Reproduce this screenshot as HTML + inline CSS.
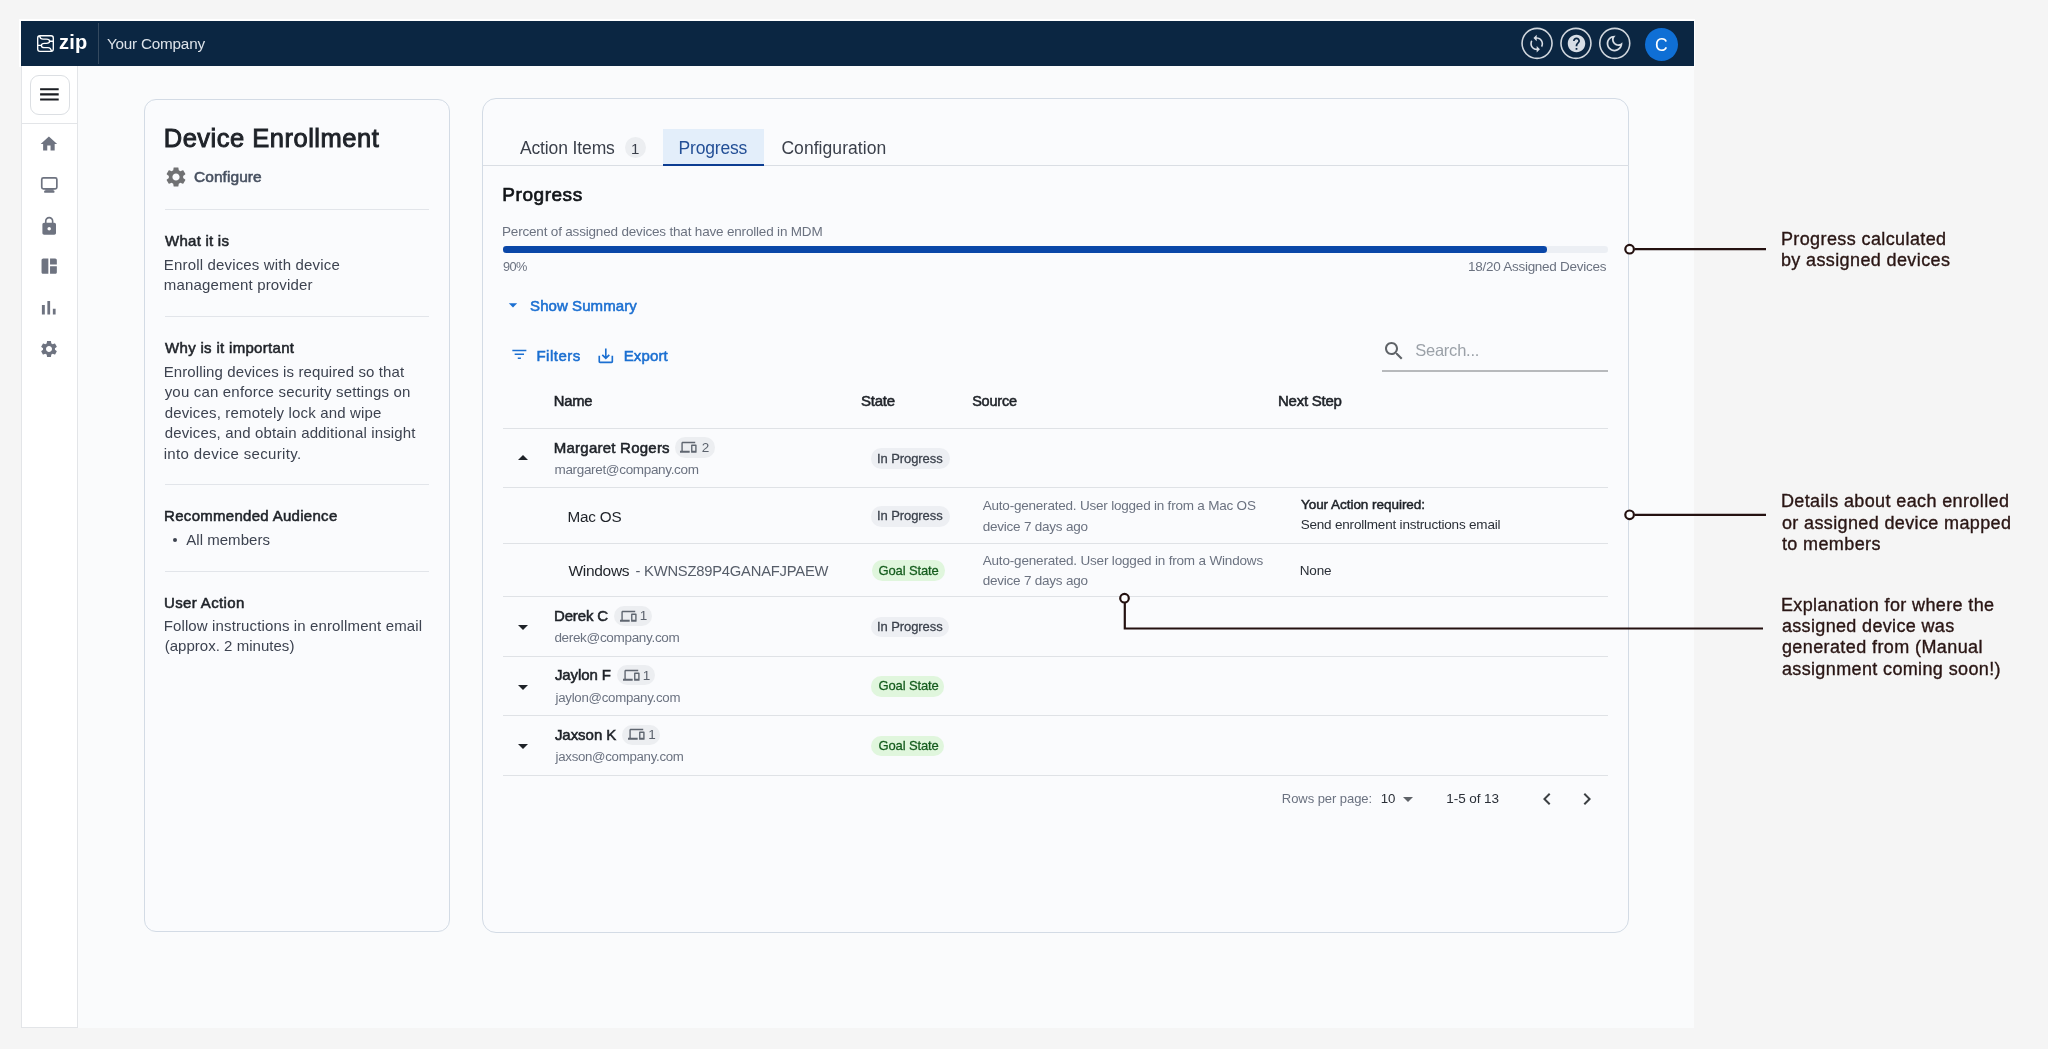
<!DOCTYPE html>
<html><head><meta charset="utf-8"><title>Device Enrollment</title>
<style>
html,body{margin:0;padding:0;}
body{width:2048px;height:1049px;background:#f5f5f5;position:relative;overflow:hidden;font-family:"Liberation Sans", sans-serif;}
.txt{position:absolute;left:0;top:0;width:2048px;height:1049px;will-change:transform;}
.t{position:absolute;white-space:nowrap;}
.a{position:absolute;box-sizing:border-box;}
svg.a{overflow:visible;}
</style></head><body>
<!-- frame -->
<div class="a" style="left:19px;top:19px;width:1676px;height:48px;background:#ffffff"></div>
<div class="a" style="left:78px;top:66px;width:1616px;height:962px;background:#fafbfc"></div>
<!-- header -->
<div class="a" style="left:20.5px;top:21px;width:1673.5px;height:45px;background:#0b2642"></div>
<div class="a" style="left:97.5px;top:23px;width:1px;height:41px;background:#34495f"></div>
<svg class="a" style="left:37px;top:34.9px" width="17" height="17" viewBox="0 0 17 17" fill="none" stroke="#ffffff" stroke-width="1.35">
  <rect x="0.7" y="0.7" width="15.6" height="15.6" rx="2.2"/>
  <path d="M2.6 0.8 C3.0 3.0 4.2 4.1 6.0 4.1 L9.4 4.1 C11.3 4.1 12.6 5.0 12.6 6.2 C12.6 7.4 11.3 8.3 9.4 8.3 L7.6 8.3 C5.7 8.3 4.4 9.2 4.4 10.4 C4.4 11.6 5.7 12.6 7.6 12.6 L11.0 12.6 C12.8 12.6 14.0 13.8 14.4 16.2"/>
  <path d="M12.6 6.2 H16.2 M0.8 10.4 H4.4"/>
</svg>
<!-- header icons -->
<svg class="a" style="left:0;top:0" width="1700" height="70"><circle cx="1537.05" cy="43.35" r="15" fill="none" stroke="#d0d6dd" stroke-width="1.6"/></svg>
<svg class="a" style="left:0;top:0" width="1700" height="70"><circle cx="1575.95" cy="43.35" r="15" fill="none" stroke="#d0d6dd" stroke-width="1.6"/></svg>
<svg class="a" style="left:0;top:0" width="1700" height="70"><circle cx="1614.75" cy="43.35" r="15" fill="none" stroke="#d0d6dd" stroke-width="1.6"/></svg>
<svg class="a" style="left:1527.3px;top:33.6px" width="19.4" height="19.4" viewBox="0 0 24 24" fill="#d7dde5"><path d="M12 4V1L8 5l4 4V6c3.31 0 6 2.69 6 6 0 1.01-.25 1.97-.7 2.8l1.46 1.46C19.54 15.03 20 13.57 20 12c0-4.42-3.58-8-8-8zm0 14c-3.31 0-6-2.69-6-6 0-1.01.25-1.97.7-2.8L5.24 7.74C4.46 8.97 4 10.43 4 12c0 4.42 3.58 8 8 8v3l4-4-4-4v3z"/></svg>
<svg class="a" style="left:1565.5px;top:32.8px" width="21" height="21" viewBox="0 0 24 24" fill="#d7dde5"><path d="M12 2C6.48 2 2 6.48 2 12s4.48 10 10 10 10-4.48 10-10S17.52 2 12 2zm1 17h-2v-2h2v2zm2.07-7.75l-.9.92C13.45 12.9 13 13.5 13 15h-2v-.5c0-1.1.45-2.1 1.17-2.83l1.24-1.26c.37-.36.59-.86.59-1.41 0-1.1-.9-2-2-2s-2 .9-2 2H8c0-2.21 1.79-4 4-4s4 1.79 4 4c0 .88-.36 1.68-.93 2.25z"/></svg>
<svg class="a" style="left:1604.3px;top:32.8px" width="21" height="21" viewBox="0 0 24 24" fill="#d7dde5"><path d="M9.37 5.51c-.18.64-.27 1.31-.27 1.99 0 4.08 3.32 7.4 7.4 7.4.68 0 1.35-.09 1.99-.27C17.45 17.19 14.93 19 12 19c-3.86 0-7-3.14-7-7 0-2.93 1.81-5.450 4.37-6.49zM12 3c-4.97 0-9 4.03-9 9s4.03 9 9 9 9-4.03 9-9c0-.46-.04-.92-.1-1.36-.98 1.37-2.58 2.26-4.4 2.26-2.98 0-5.4-2.42-5.4-5.4 0-1.81.89-3.42 2.26-4.4-.44-.06-.9-.1-1.36-.1z"/></svg>
<div class="a" style="left:1644.8px;top:27.7px;width:33px;height:33px;background:#0f6fd5;border-radius:50%"></div>

<!-- sidebar -->
<div class="a" style="left:20.5px;top:66px;width:57.5px;height:962px;background:#ffffff;border:1px solid #e3e5e8;border-top:none"></div>
<div class="a" style="left:29.5px;top:74.5px;width:40px;height:40px;border:1px solid #dcdfe3;border-radius:9px;background:#fff"></div>
<svg class="a" style="left:37.2px;top:82.2px" width="24.8" height="24.8" viewBox="0 0 24 24" fill="#1a1d22"><path d="M3 18h18v-2H3v2zm0-5h18v-2H3v2zm0-5h18V6H3v2z"/></svg>
<div class="a" style="left:21.5px;top:122.5px;width:55.5px;height:1px;background:#e3e5e8"></div>
<svg class="a" style="left:39.15px;top:133.6px" width="19.8" height="19.8" viewBox="0 0 24 24" fill="#6e7380"><path d="M10 20v-6h4v6h5v-8h3L12 3 2 12h3v8z"/></svg>
<svg class="a" style="left:0;top:0" width="80" height="200" viewBox="0 0 80 200"><rect x="41.75" y="177.85" width="15.1" height="11" rx="1.6" fill="none" stroke="#6e7380" stroke-width="1.7"/><rect x="45.3" y="189.2" width="8.2" height="1.6" fill="#6e7380"/><rect x="44.2" y="190.6" width="10.2" height="2.2" rx="0.6" fill="#6e7380"/></svg>
<svg class="a" style="left:39px;top:215.75px" width="20.4" height="20.4" viewBox="0 0 24 24" fill="#6e7380"><path d="M18 8h-1V6c0-2.76-2.24-5-5-5S7 3.24 7 6v2H6c-1.1 0-2 .9-2 2v10c0 1.1.9 2 2 2h12c1.1 0 2-.9 2-2V10c0-1.1-.9-2-2-2zm-6 9c-1.1 0-2-.9-2-2s.9-2 2-2 2 .9 2 2-.9 2-2 2zm3.1-9H8.9V6c0-1.71 1.39-3.1 3.1-3.1 1.71 0 3.1 1.39 3.1 3.1v2z"/></svg>
<svg class="a" style="left:39.15px;top:256.45px" width="20.4" height="20.4" viewBox="0 0 24 24" fill="#6e7380"><path d="M11 21H5c-1.1 0-2-.9-2-2V5c0-1.1.9-2 2-2h6v18zm2 0h6c1.1 0 2-.9 2-2v-7h-8v9zm8-11V5c0-1.1-.9-2-2-2h-6v7h8z"/></svg>
<svg class="a" style="left:37.4px;top:296.1px" width="23.5" height="23.5" viewBox="0 0 24 24" fill="#6e7380"><path d="M5 9.2h3V19H5zM10.6 5h2.8v14h-2.8zm5.6 8H19v6h-2.8z"/></svg>
<svg class="a" style="left:39.2px;top:338.9px" width="20" height="20" viewBox="0 0 24 24" fill="#6e7380"><path d="M19.14 12.94c.04-.3.06-.61.06-.94 0-.32-.02-.64-.07-.94l2.03-1.58c.18-.14.23-.41.12-.61l-1.92-3.32c-.12-.22-.37-.29-.59-.22l-2.39.96c-.5-.38-1.030-.7-1.62-.94l-.36-2.54c-.04-.24-.24-.41-.48-.41h-3.84c-.24 0-.43.17-.47.41l-.36 2.54c-.59.24-1.13.57-1.62.94l-2.39-.96c-.22-.08-.47 0-.59.22L2.74 8.87c-.12.21-.08.47.12.61l2.03 1.58c-.05.3-.09.63-.09.94s.02.64.07.94l-2.03 1.58c-.18.14-.23.41-.12.61l1.92 3.32c.12.22.37.29.59.22l2.39-.96c.5.38 1.03.7 1.62.94l.36 2.54c.05.24.24.41.48.41h3.84c.24 0 .44-.17.47-.41l.36-2.54c.59-.24 1.13-.56 1.62-.94l2.39.96c.22.08.47 0 .59-.22l1.92-3.32c.12-.22.07-.47-.12-.61l-2.01-1.58zM12 15.6c-1.98 0-3.6-1.62-3.6-3.6s1.62-3.6 3.6-3.6 3.6 1.62 3.6 3.6-1.62 3.6-3.6 3.6z"/></svg>

<!-- left card -->
<div class="a" style="left:144px;top:99px;width:305.5px;height:832.5px;border:1.4px solid #d3dbe5;border-radius:12px;background:#fafbfd"></div>
<svg class="a" style="left:164.3px;top:164.9px" width="24" height="24" viewBox="0 0 24 24" fill="#707173"><path d="M19.14 12.94c.04-.3.06-.61.06-.94 0-.32-.02-.64-.07-.94l2.03-1.58c.18-.14.23-.41.12-.61l-1.92-3.32c-.12-.22-.37-.29-.59-.22l-2.39.96c-.5-.38-1.030-.7-1.62-.94l-.36-2.54c-.04-.24-.24-.41-.48-.41h-3.84c-.24 0-.43.17-.47.41l-.36 2.54c-.59.24-1.13.57-1.620.94l-2.39-.96c-.22-.08-.47 0-.59.22L2.74 8.87c-.12.21-.08.47.12.61l2.03 1.58c-.05.3-.09.63-.09.94s.02.64.07.94l-2.03 1.58c-.18.14-.23.41-.12.61l1.92 3.32c.12.22.37.29.59.22l2.39-.96c.5.38 1.03.7 1.62.94l.36 2.54c.05.24.24.41.48.41h3.840c.24 0 .44-.17.47-.41l.36-2.54c.59-.24 1.13-.56 1.62-.94l2.39.96c.22.08.47 0 .59-.22l1.92-3.32c.12-.22.07-.47-.12-.61l-2.01-1.58zM12 15.6c-1.98 0-3.6-1.62-3.6-3.6s1.62-3.6 3.6-3.6 3.6 1.62 3.6 3.6-1.62 3.6-3.6 3.6z"/></svg>
<div class="a" style="left:164.7px;top:209px;width:264.5px;height:1.2px;background:#e2e5ea"></div>
<div class="a" style="left:164.7px;top:316px;width:264.5px;height:1.2px;background:#e2e5ea"></div>
<div class="a" style="left:164.7px;top:484.2px;width:264.5px;height:1.2px;background:#e2e5ea"></div>
<div class="a" style="left:164.7px;top:570.7px;width:264.5px;height:1.2px;background:#e2e5ea"></div>
<div class="a" style="left:173.2px;top:538px;width:4px;height:4px;border-radius:50%;background:#3d4350"></div>

<!-- right card -->
<div class="a" style="left:481.5px;top:98px;width:1147.8px;height:834.5px;border:1.4px solid #d3dbe5;border-radius:14px;background:#fafbfd"></div>
<div class="a" style="left:482.5px;top:164.8px;width:1146px;height:1.5px;background:#dadee4"></div>
<div class="a" style="left:662.9px;top:129.2px;width:101.3px;height:36.8px;background:#e3eefa"></div>
<div class="a" style="left:662.9px;top:163.5px;width:101.3px;height:2.5px;background:#0c3d92"></div>
<div class="a" style="left:624.8px;top:136.8px;width:21.4px;height:21.5px;border-radius:11px;background:#eceef1"></div>

<!-- progress -->
<div class="a" style="left:503px;top:246.3px;width:1104.6px;height:6.6px;border-radius:3.3px;background:#eceff4"></div>
<div class="a" style="left:503px;top:246.3px;width:1044px;height:6.6px;border-radius:3.3px;background:#0a47a8"></div>
<svg class="a" style="left:503px;top:295.3px" width="20" height="20" viewBox="0 0 24 24" fill="#1b6fd1"><path d="M7 10l5 5 5-5z"/></svg>

<!-- toolbar -->
<svg class="a" style="left:509.6px;top:345.3px" width="18.7" height="18.7" viewBox="0 0 24 24" fill="#1b6fd1"><path d="M10 18h4v-2h-4v2zM3 6v2h18V6H3zm3 7h12v-2H6v2z"/></svg>
<svg class="a" style="left:596.45px;top:345.55px" width="19.6" height="19.6" viewBox="0 0 24 24" fill="#1b6fd1"><path d="M19 12v7H5v-7H3v7c0 1.1.9 2 2 2h14c1.1 0 2-.9 2-2v-7h-2zm-6 .67l2.59-2.58L17 11.5l-5 5-5-5 1.41-1.41L11 12.67V3h2z"/></svg>
<svg class="a" style="left:1381.5px;top:338.5px" width="24" height="24" viewBox="0 0 24 24" fill="#5f6368"><path d="M15.5 14h-.79l-.28-.27C15.41 12.59 16 11.11 16 9.5 16 5.910 13.09 3 9.5 3S3 5.91 3 9.5 5.91 16 9.5 16c1.61 0 3.09-.59 4.23-1.57l.27.28v.79l5 4.99L20.49 19l-4.99-5zm-6 0C7.01 14 5 11.99 5 9.5S7.01 5 9.5 5 14 7.01 14 9.5 11.990 14 9.5 14z"/></svg>
<div class="a" style="left:1382px;top:370px;width:225.6px;height:1.8px;background:#b7b9bc"></div>

<!-- table lines -->
<div class="a" style="left:503px;top:427.8px;width:1104.6px;height:1.2px;background:#dfe2e6"></div>
<div class="a" style="left:503px;top:487.3px;width:1104.6px;height:1.2px;background:#dfe2e6"></div>
<div class="a" style="left:503px;top:542.6px;width:1104.6px;height:1.2px;background:#dfe2e6"></div>
<div class="a" style="left:503px;top:596px;width:1104.6px;height:1.2px;background:#dfe2e6"></div>
<div class="a" style="left:503px;top:655.9px;width:1104.6px;height:1.2px;background:#dfe2e6"></div>
<div class="a" style="left:503px;top:715.2px;width:1104.6px;height:1.2px;background:#dfe2e6"></div>
<div class="a" style="left:503px;top:774.7px;width:1104.6px;height:1.2px;background:#dfe2e6"></div>

<!-- expand arrows -->
<svg class="a" style="left:511.4px;top:446.4px" width="24" height="24" viewBox="0 0 24 24" fill="#1e2228"><path d="M7 14l5-5 5 5z"/></svg>
<svg class="a" style="left:511.1px;top:615.1px" width="24" height="24" viewBox="0 0 24 24" fill="#1e2228"><path d="M7 10l5 5 5-5z"/></svg>
<svg class="a" style="left:511.1px;top:674.6px" width="24" height="24" viewBox="0 0 24 24" fill="#1e2228"><path d="M7 10l5 5 5-5z"/></svg>
<svg class="a" style="left:511.1px;top:734.1px" width="24" height="24" viewBox="0 0 24 24" fill="#1e2228"><path d="M7 10l5 5 5-5z"/></svg>

<!-- device badges -->
<div class="a" style="left:674.9px;top:437.3px;width:39.7px;height:20.3px;border-radius:10.2px;background:#eceef1"></div>
<div class="a" style="left:614.1px;top:605.9px;width:38.1px;height:19.9px;border-radius:10px;background:#eceef1"></div>
<div class="a" style="left:617.1px;top:665.2px;width:38px;height:20px;border-radius:10px;background:#eceef1"></div>
<div class="a" style="left:622.3px;top:725px;width:38px;height:19.9px;border-radius:10px;background:#eceef1"></div>

<svg class="a" style="left:680.2px;top:439.2px" width="16.6" height="16.6" viewBox="0 0 24 24" fill="#5f6670"><path d="M4 6h18V4H4c-1.1 0-2 .9-2 2v11H0v3h14v-3H4V6zm19 2h-6c-.55 0-1 .45-1 1v10c0 .55.45 1 1 1h6c.55 0 1-.45 1-1V9c0-.55-.45-1-1-1zm-1 9h-4v-7h4v7z"/></svg>
<svg class="a" style="left:619.6px;top:607.5px" width="16.6" height="16.6" viewBox="0 0 24 24" fill="#5f6670"><path d="M4 6h18V4H4c-1.1 0-2 .9-2 2v11H0v3h14v-3H4V6zm19 2h-6c-.55 0-1 .45-1 1v10c0 .55.45 1 1 1h6c.55 0 1-.45 1-1V9c0-.55-.45-1-1-1zm-1 9h-4v-7h4v7z"/></svg>
<svg class="a" style="left:622.6px;top:666.8px" width="16.6" height="16.6" viewBox="0 0 24 24" fill="#5f6670"><path d="M4 6h18V4H4c-1.1 0-2 .9-2 2v11H0v3h14v-3H4V6zm19 2h-6c-.55 0-1 .45-1 1v10c0 .55.45 1 1 1h6c.55 0 1-.45 1-1V9c0-.55-.45-1-1-1zm-1 9h-4v-7h4v7z"/></svg>
<svg class="a" style="left:627.6px;top:726.3px" width="16.6" height="16.6" viewBox="0 0 24 24" fill="#5f6670"><path d="M4 6h18V4H4c-1.1 0-2 .9-2 2v11H0v3h14v-3H4V6zm19 2h-6c-.55 0-1 .45-1 1v10c0 .55.45 1 1 1h6c.55 0 1-.45 1-1V9c0-.55-.45-1-1-1zm-1 9h-4v-7h4v7z"/></svg>
<!-- state pills -->
<div class="a" style="left:871px;top:448.4px;width:79px;height:20.6px;border-radius:10.3px;background:#edeff3"></div>
<div class="a" style="left:871px;top:506.4px;width:79px;height:20.6px;border-radius:10.3px;background:#edeff3"></div>
<div class="a" style="left:871.5px;top:560.4px;width:73.7px;height:20.6px;border-radius:10.3px;background:#e0f6dd"></div>
<div class="a" style="left:871px;top:616.9px;width:78.4px;height:20.4px;border-radius:10.2px;background:#edeff3"></div>
<div class="a" style="left:871px;top:676.4px;width:73.4px;height:20.2px;border-radius:10.1px;background:#e0f6dd"></div>
<div class="a" style="left:871px;top:735.9px;width:73.4px;height:20.2px;border-radius:10.1px;background:#e0f6dd"></div>

<!-- pagination icons -->
<svg class="a" style="left:1395.8px;top:786.5px" width="24" height="24" viewBox="0 0 24 24" fill="#5f6368"><path d="M7 10l5 5 5-5z"/></svg>
<svg class="a" style="left:1534.5px;top:786.6px" width="24" height="24" viewBox="0 0 24 24" fill="#3c4043"><path d="M15.41 7.41L14 6l-6 6 6 6 1.41-1.41L10.83 12z"/></svg>
<svg class="a" style="left:1575.2px;top:786.6px" width="24" height="24" viewBox="0 0 24 24" fill="#3c4043"><path d="M10 6L8.59 7.41 13.17 12l-4.58 4.59L10 18l6-6z"/></svg>

<!-- annotations -->
<svg class="a" style="left:0;top:0" width="2048" height="1049" viewBox="0 0 2048 1049" fill="none" stroke="#241110" stroke-width="2.2">
  <path d="M1634.6 249.2 H1766"/>
  <circle cx="1629.6" cy="249.2" r="4.3" fill="#fff"/>
  <path d="M1634.6 514.8 H1766"/>
  <circle cx="1629.6" cy="514.8" r="4.3" fill="#fff"/>
  <path d="M1124.8 602.5 V628.5 H1763"/>
  <circle cx="1124.5" cy="598.2" r="4.3" fill="#fff"/>
</svg>

<div class="txt">
<span class="t" style="left:59.10px;top:32px;font-size:20px;line-height:20px;color:#ffffff;font-weight:700;letter-spacing:0.122px">zip</span>
<span class="t" style="left:107.00px;top:36px;font-size:15.25px;line-height:15.25px;color:#dde3ea;letter-spacing:-0.206px">Your Company</span>
<span class="t" style="left:1655.00px;top:37px;font-size:17.5px;line-height:17.5px;color:#ffffff">C</span>
<span class="t" style="left:163.77px;top:126px;font-size:25.5px;line-height:25.5px;color:#1e2228;-webkit-text-stroke:0.94px #1e2228;letter-spacing:0.502px">Device Enrollment</span>
<span class="t" style="left:193.98px;top:169px;font-size:15.5px;line-height:15.5px;color:#475060;-webkit-text-stroke:0.57px #475060;letter-spacing:0.068px">Configure</span>
<span class="t" style="left:165.08px;top:233px;font-size:15px;line-height:15px;color:#1e2228;-webkit-text-stroke:0.55px #1e2228;letter-spacing:0.241px">What it is</span>
<span class="t" style="left:163.80px;top:257px;font-size:15px;line-height:15px;color:#3d4350;letter-spacing:0.168px">Enroll devices with device</span>
<span class="t" style="left:163.80px;top:277px;font-size:15px;line-height:15px;color:#3d4350;letter-spacing:0.149px">management provider</span>
<span class="t" style="left:165.08px;top:340px;font-size:15px;line-height:15px;color:#1e2228;-webkit-text-stroke:0.55px #1e2228;letter-spacing:0.309px">Why is it important</span>
<span class="t" style="left:163.70px;top:364px;font-size:15px;line-height:15px;color:#3d4350;letter-spacing:0.102px">Enrolling devices is required so that</span>
<span class="t" style="left:164.70px;top:384px;font-size:15px;line-height:15px;color:#3d4350;letter-spacing:0.181px">you can enforce security settings on</span>
<span class="t" style="left:164.70px;top:405px;font-size:15px;line-height:15px;color:#3d4350;letter-spacing:0.163px">devices, remotely lock and wipe</span>
<span class="t" style="left:164.70px;top:425px;font-size:15px;line-height:15px;color:#3d4350;letter-spacing:0.151px">devices, and obtain additional insight</span>
<span class="t" style="left:163.70px;top:446px;font-size:15px;line-height:15px;color:#3d4350;letter-spacing:0.343px">into device security.</span>
<span class="t" style="left:164.08px;top:508px;font-size:15px;line-height:15px;color:#1e2228;-webkit-text-stroke:0.55px #1e2228;letter-spacing:0.292px">Recommended Audience</span>
<span class="t" style="left:186.30px;top:532px;font-size:15px;line-height:15px;color:#3d4350;letter-spacing:0.025px">All members</span>
<span class="t" style="left:164.08px;top:595px;font-size:15px;line-height:15px;color:#1e2228;-webkit-text-stroke:0.55px #1e2228;letter-spacing:0.347px">User Action</span>
<span class="t" style="left:163.70px;top:618px;font-size:15px;line-height:15px;color:#3d4350;letter-spacing:0.129px">Follow instructions in enrollment email</span>
<span class="t" style="left:164.70px;top:638px;font-size:15px;line-height:15px;color:#3d4350;letter-spacing:0.026px">(approx. 2 minutes)</span>
<span class="t" style="left:519.90px;top:140px;font-size:17.5px;line-height:17.5px;color:#3a3f4a;letter-spacing:-0.121px">Action Items</span>
<span class="t" style="left:631.00px;top:141px;font-size:15px;line-height:15px;color:#3a3f4a">1</span>
<span class="t" style="left:678.50px;top:140px;font-size:17.5px;line-height:17.5px;color:#234f96;letter-spacing:-0.182px">Progress</span>
<span class="t" style="left:781.40px;top:140px;font-size:17.5px;line-height:17.5px;color:#3a3f4a;letter-spacing:0.062px">Configuration</span>
<span class="t" style="left:502.35px;top:185px;font-size:19px;line-height:19px;color:#111418;-webkit-text-stroke:0.7px #111418;letter-spacing:0.539px">Progress</span>
<span class="t" style="left:502.00px;top:225px;font-size:13.5px;line-height:13.5px;color:#6b7280;letter-spacing:-0.183px">Percent of assigned devices that have enrolled in MDM</span>
<span class="t" style="left:503.00px;top:261px;font-size:12.75px;line-height:12.75px;color:#6b7280;letter-spacing:-0.558px">90%</span>
<span class="t" style="left:1468.00px;top:260px;font-size:13.5px;line-height:13.5px;color:#6b7280;letter-spacing:-0.266px">18/20 Assigned Devices</span>
<span class="t" style="left:530.07px;top:298px;font-size:15px;line-height:15px;color:#1b6fd1;-webkit-text-stroke:0.55px #1b6fd1;letter-spacing:0.071px">Show Summary</span>
<span class="t" style="left:536.38px;top:348px;font-size:15px;line-height:15px;color:#1b6fd1;-webkit-text-stroke:0.55px #1b6fd1;letter-spacing:0.520px">Filters</span>
<span class="t" style="left:623.67px;top:348px;font-size:15px;line-height:15px;color:#1b6fd1;-webkit-text-stroke:0.55px #1b6fd1;letter-spacing:0.153px">Export</span>
<span class="t" style="left:1415.20px;top:342px;font-size:16.5px;line-height:16.5px;color:#9ba1a8;letter-spacing:-0.229px">Search...</span>
<span class="t" style="left:553.79px;top:394px;font-size:14.75px;line-height:14.75px;color:#1e2228;-webkit-text-stroke:0.55px #1e2228;letter-spacing:-0.222px">Name</span>
<span class="t" style="left:861.07px;top:393px;font-size:15px;line-height:15px;color:#1e2228;-webkit-text-stroke:0.55px #1e2228;letter-spacing:-0.258px">State</span>
<span class="t" style="left:972.17px;top:394px;font-size:14.5px;line-height:14.5px;color:#1e2228;-webkit-text-stroke:0.54px #1e2228;letter-spacing:-0.209px">Source</span>
<span class="t" style="left:1277.98px;top:393px;font-size:15px;line-height:15px;color:#1e2228;-webkit-text-stroke:0.55px #1e2228;letter-spacing:-0.234px">Next Step</span>
<span class="t" style="left:553.77px;top:440px;font-size:15px;line-height:15px;color:#1e2228;-webkit-text-stroke:0.55px #1e2228;letter-spacing:0.236px">Margaret Rogers</span>
<span class="t" style="left:554.50px;top:463px;font-size:13.5px;line-height:13.5px;color:#6b7280;letter-spacing:-0.332px">margaret@company.com</span>
<span class="t" style="left:567.52px;top:509px;font-size:15.25px;line-height:15.25px;color:#1e2228;letter-spacing:-0.193px">Mac OS</span>
<span class="t" style="left:568.50px;top:563px;font-size:15.5px;line-height:15.5px;color:#1e2228;letter-spacing:-0.305px">Windows</span>
<span class="t" style="left:635.50px;top:564px;font-size:14.75px;line-height:14.75px;color:#565d69;letter-spacing:-0.214px">- KWNSZ89P4GANAFJPAEW</span>
<span class="t" style="left:982.70px;top:499px;font-size:13.5px;line-height:13.5px;color:#6b7280;letter-spacing:-0.208px">Auto-generated. User logged in from a Mac OS</span>
<span class="t" style="left:982.70px;top:520px;font-size:13.5px;line-height:13.5px;color:#6b7280;letter-spacing:-0.220px">device 7 days ago</span>
<span class="t" style="left:1300.95px;top:498px;font-size:13.5px;line-height:13.5px;color:#1e2228;-webkit-text-stroke:0.5px #1e2228;letter-spacing:-0.036px">Your Action required:</span>
<span class="t" style="left:1300.70px;top:518px;font-size:13.5px;line-height:13.5px;color:#2a2f37;letter-spacing:-0.198px">Send enrollment instructions email</span>
<span class="t" style="left:982.70px;top:554px;font-size:13.5px;line-height:13.5px;color:#6b7280;letter-spacing:-0.175px">Auto-generated. User logged in from a Windows</span>
<span class="t" style="left:982.70px;top:574px;font-size:13.5px;line-height:13.5px;color:#6b7280;letter-spacing:-0.220px">device 7 days ago</span>
<span class="t" style="left:1299.70px;top:564px;font-size:13.5px;line-height:13.5px;color:#2a2f37;letter-spacing:-0.155px">None</span>
<span class="t" style="left:553.98px;top:608px;font-size:15px;line-height:15px;color:#1e2228;-webkit-text-stroke:0.55px #1e2228;letter-spacing:-0.138px">Derek C</span>
<span class="t" style="left:554.40px;top:631px;font-size:13.5px;line-height:13.5px;color:#6b7280;letter-spacing:-0.322px">derek@company.com</span>
<span class="t" style="left:554.88px;top:667px;font-size:15px;line-height:15px;color:#1e2228;-webkit-text-stroke:0.55px #1e2228;letter-spacing:-0.097px">Jaylon F</span>
<span class="t" style="left:555.58px;top:691px;font-size:13.25px;line-height:13.25px;color:#6b7280;letter-spacing:-0.277px">jaylon@company.com</span>
<span class="t" style="left:554.88px;top:727px;font-size:15px;line-height:15px;color:#1e2228;-webkit-text-stroke:0.55px #1e2228;letter-spacing:-0.035px">Jaxson K</span>
<span class="t" style="left:555.58px;top:750px;font-size:13.25px;line-height:13.25px;color:#6b7280;letter-spacing:-0.293px">jaxson@company.com</span>
<span class="t" style="left:1281.80px;top:792px;font-size:13px;line-height:13px;color:#6b7280;letter-spacing:-0.057px">Rows per page:</span>
<span class="t" style="left:1380.82px;top:792px;font-size:13.25px;line-height:13.25px;color:#2a2f37;letter-spacing:-0.158px">10</span>
<span class="t" style="left:1446.30px;top:792px;font-size:13.5px;line-height:13.5px;color:#2a2f37;letter-spacing:-0.085px">1-5 of 13</span>
<span class="t" style="left:877.03px;top:452px;font-size:13px;line-height:13px;color:#3a404b;-webkit-text-stroke:0.26px #3a404b;letter-spacing:-0.083px">In Progress</span>
<span class="t" style="left:877.03px;top:509px;font-size:13px;line-height:13px;color:#3a404b;-webkit-text-stroke:0.26px #3a404b;letter-spacing:-0.083px">In Progress</span>
<span class="t" style="left:877.03px;top:620px;font-size:13px;line-height:13px;color:#3a404b;-webkit-text-stroke:0.26px #3a404b;letter-spacing:-0.083px">In Progress</span>
<span class="t" style="left:878.43px;top:564px;font-size:13px;line-height:13px;color:#145c1d;-webkit-text-stroke:0.26px #145c1d;letter-spacing:-0.117px">Goal State</span>
<span class="t" style="left:878.43px;top:679px;font-size:13px;line-height:13px;color:#145c1d;-webkit-text-stroke:0.26px #145c1d;letter-spacing:-0.117px">Goal State</span>
<span class="t" style="left:878.43px;top:739px;font-size:13px;line-height:13px;color:#145c1d;-webkit-text-stroke:0.26px #145c1d;letter-spacing:-0.117px">Goal State</span>
<span class="t" style="left:701.80px;top:441px;font-size:13.5px;line-height:13.5px;color:#5b626d">2</span>
<span class="t" style="left:639.80px;top:609px;font-size:13.5px;line-height:13.5px;color:#5b626d">1</span>
<span class="t" style="left:642.70px;top:669px;font-size:13.5px;line-height:13.5px;color:#5b626d">1</span>
<span class="t" style="left:648.20px;top:728px;font-size:13.5px;line-height:13.5px;color:#5b626d">1</span>
<span class="t" style="left:1780.88px;top:230px;font-size:18px;line-height:18px;color:#2a1614;-webkit-text-stroke:0.36px #2a1614;letter-spacing:0.398px">Progress calculated</span>
<span class="t" style="left:1780.88px;top:251px;font-size:18px;line-height:18px;color:#2a1614;-webkit-text-stroke:0.36px #2a1614;letter-spacing:0.386px">by assigned devices</span>
<span class="t" style="left:1780.88px;top:492px;font-size:18px;line-height:18px;color:#2a1614;-webkit-text-stroke:0.36px #2a1614;letter-spacing:0.381px">Details about each enrolled</span>
<span class="t" style="left:1781.88px;top:514px;font-size:18px;line-height:18px;color:#2a1614;-webkit-text-stroke:0.36px #2a1614;letter-spacing:0.375px">or assigned device mapped</span>
<span class="t" style="left:1781.88px;top:535px;font-size:18px;line-height:18px;color:#2a1614;-webkit-text-stroke:0.36px #2a1614;letter-spacing:0.390px">to members</span>
<span class="t" style="left:1780.88px;top:596px;font-size:18px;line-height:18px;color:#2a1614;-webkit-text-stroke:0.36px #2a1614;letter-spacing:0.380px">Explanation for where the</span>
<span class="t" style="left:1781.88px;top:617px;font-size:18px;line-height:18px;color:#2a1614;-webkit-text-stroke:0.36px #2a1614;letter-spacing:0.347px">assigned device was</span>
<span class="t" style="left:1781.88px;top:638px;font-size:18px;line-height:18px;color:#2a1614;-webkit-text-stroke:0.36px #2a1614;letter-spacing:0.406px">generated from (Manual</span>
<span class="t" style="left:1781.88px;top:660px;font-size:18px;line-height:18px;color:#2a1614;-webkit-text-stroke:0.36px #2a1614;letter-spacing:0.371px">assignment coming soon!)</span>
</div>
</body></html>
